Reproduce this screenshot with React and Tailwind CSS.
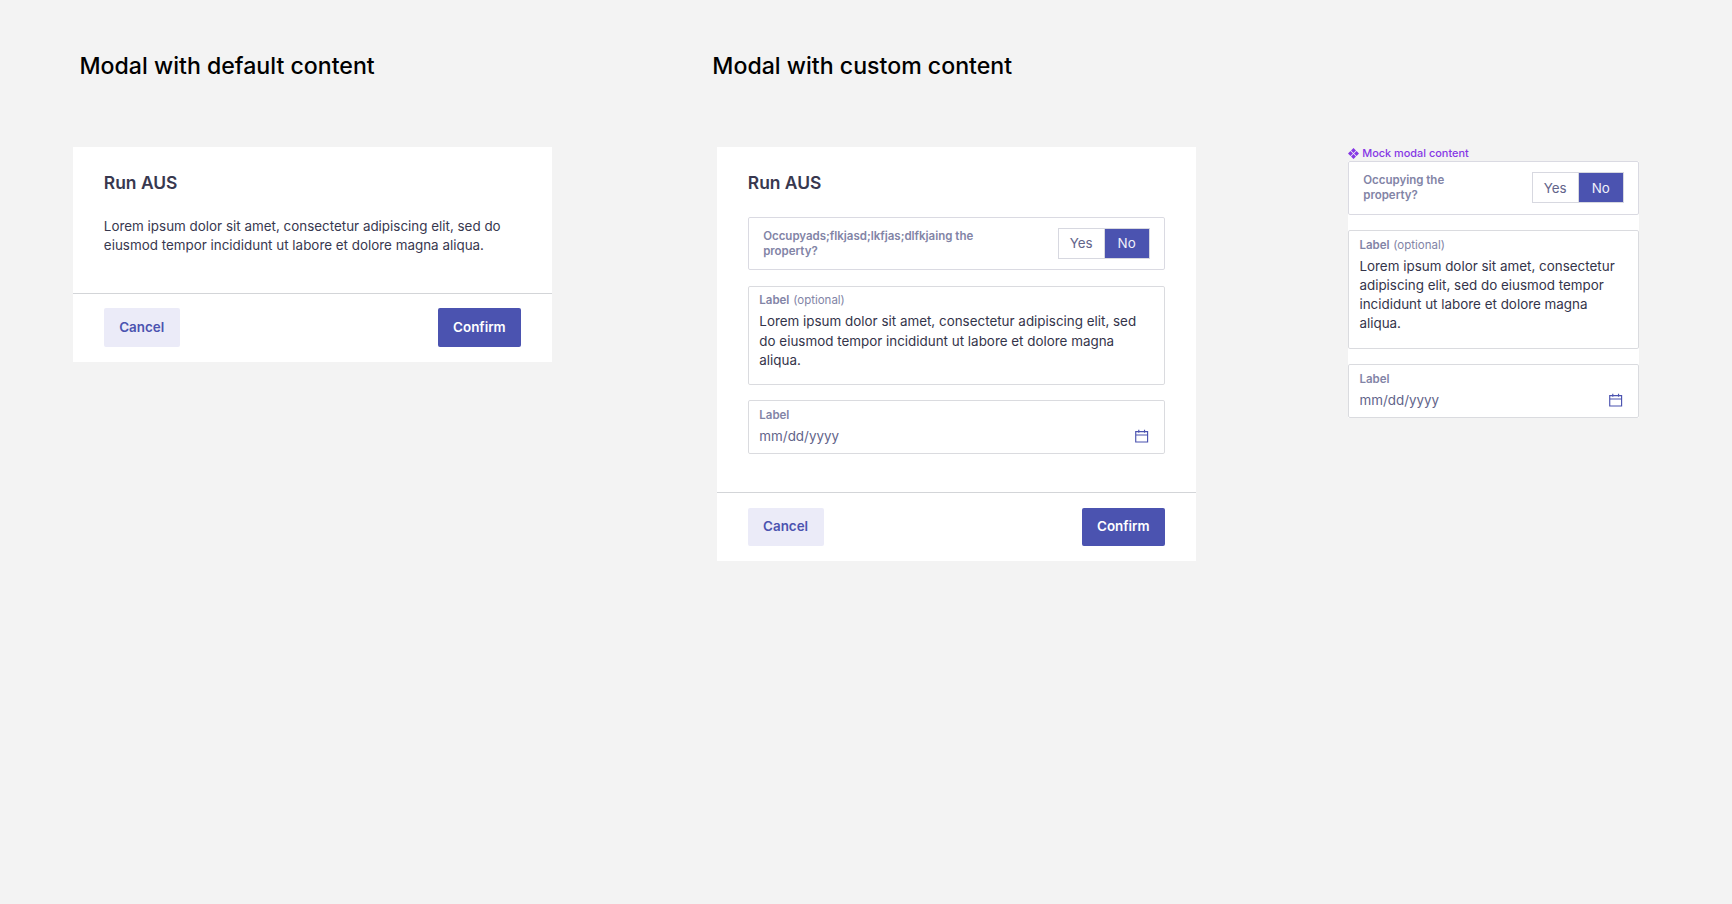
import React from "react";

const LOREM =
  "Lorem ipsum dolor sit amet, consectetur adipiscing elit, sed do eiusmod tempor incididunt ut labore et dolore magna aliqua.";

function CalendarIcon() {
  return (
    <svg className="size-4" viewBox="0 0 16 16" fill="none" stroke="#4b53b0" strokeWidth="1.2">
      <path d="M1.8 2.7h12.4v10.9H1.8zM1.8 6.3h12.4M5 .7v3.2M11 .7v3.2" />
    </svg>
  );
}

function ComponentIcon() {
  return (
    <svg className="size-[11.5px]" viewBox="0 0 12 12" fill="#8638e5">
      <path d="M6 0l2.7 2.7L6 5.4 3.3 2.7zM6 6.6l2.7 2.7L6 12 3.3 9.3zM2.7 3.3L5.4 6 2.7 8.7 0 6zM9.3 3.3L12 6 9.3 8.7 6.6 6z" />
    </svg>
  );
}

function YesNoField({ label, labelClass }) {
  return (
    <div className="flex h-14 items-center justify-between rounded-[2px] border border-[#dadae2] bg-white px-[15px]">
      <span className={`pt-px text-xs font-semibold text-[#8284a6] ${labelClass}`}>{label}</span>
      <div className="flex h-8 w-24 border border-[#d7d8e0] text-sm">
        <span className="flex flex-1 items-center justify-center border-r border-[#d7d8e0] pt-px text-[#62648a]">Yes</span>
        <span className="flex w-[46px] items-center justify-center bg-[#4b53b0] pt-px text-[#f0f0fa]">No</span>
      </div>
    </div>
  );
}

function Field({ label, optional, children }) {
  return (
    <div className="rounded-[2px] border border-[#dadbdf] bg-white px-[11px] pt-[7px]">
      <div className="flex gap-1 text-xs text-[#8284a6]">
        <span className="font-semibold">{label}</span>
        {optional && <span>(optional)</span>}
      </div>
      <div className="mt-1 text-sm">{children}</div>
    </div>
  );
}

function MockContent({ question, labelClass }) {
  return (
    <div className="flex flex-col gap-4 bg-white">
      <YesNoField label={question} labelClass={labelClass} />
      <Field label="Label" optional>
        <p className="pb-[15px] text-[#34344a]">{LOREM}</p>
      </Field>
      <Field label="Label">
        <div className="flex items-center justify-between pr-1 pb-[7px] text-[#62648a]">
          <span>mm/dd/yyyy</span>
          <CalendarIcon />
        </div>
      </Field>
    </div>
  );
}

function Modal({ title, children }) {
  return (
    <section className="w-[500px] bg-white">
      <div className="pt-[25.5px] pr-[32.5px] pb-[39.5px] pl-8">
        <h2 className="mb-[23px] text-[18.2px] leading-6 font-semibold text-[#38384f]">{title}</h2>
        {children}
      </div>
      <footer className="flex h-[72px] items-start justify-between border-t border-[#d3d5d8] pt-[15.4px] pr-[32.5px] pl-8 text-sm font-semibold">
        <button className="h-10 w-20 rounded-[2px] bg-[#ebebf8] pr-px text-[#4b53b0]">Cancel</button>
        <button className="h-10 w-[87px] rounded-[2px] bg-[#4b53b0] text-white">Confirm</button>
      </footer>
    </section>
  );
}

export default function App() {
  return (
    <div className="h-[904px] w-[1732px] overflow-hidden bg-[#f3f3f3] font-['Inter',sans-serif]">
      <div className="flex items-start pt-[53px] pl-[76.4px] [zoom:0.958]">
        <div className="w-[672.2px]">
          <h1 className="mb-[68.6px] pl-[6.6px] text-[24.15px] leading-8 font-medium text-black">Modal with default content</h1>
          <Modal title="Run AUS">
            <p className="text-sm text-[#38384f]">{LOREM}</p>
          </Modal>
        </div>
        <div className="w-[658.4px]">
          <h1 className="-ml-[5px] mb-[68.6px] text-[24.15px] leading-8 font-medium text-black">Modal with custom content</h1>
          <Modal title="Run AUS">
            <MockContent question="Occupyads;flkjasd;lkfjas;dlfkjaing the property?" labelClass="w-[240px]" />
          </Modal>
        </div>
        <div className="w-[304px] pt-[98.5px]">
          <div className="flex h-[16.5px] items-center gap-[3.5px] text-[11.4px] font-medium text-[#8638e5]">
            <ComponentIcon />
            Mock modal content
          </div>
          <MockContent question="Occupying the property?" labelClass="w-[100px]" />
        </div>
      </div>
    </div>
  );
}
